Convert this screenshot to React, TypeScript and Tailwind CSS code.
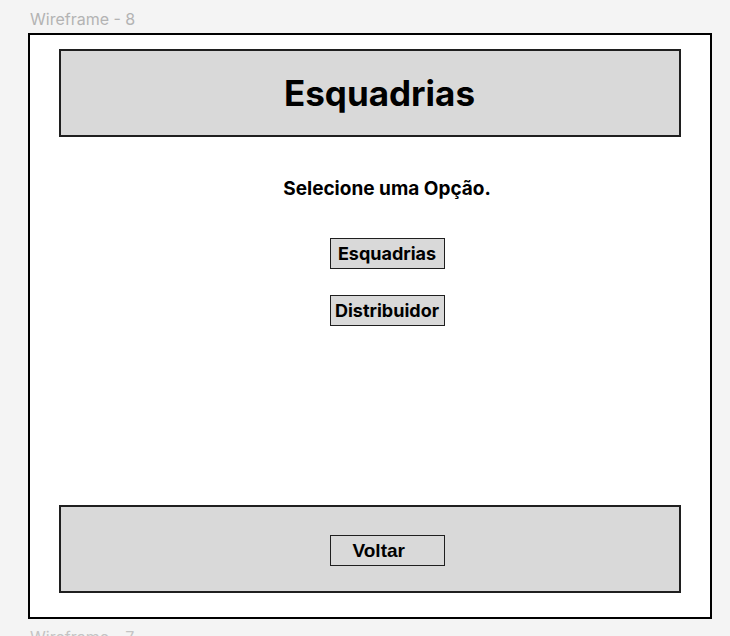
import React from "react";

export default function App() {
  return (
    <div className="w-[730px] h-[636px] bg-[#f4f4f4] overflow-hidden relative" style={{ fontFamily: "Inter, 'Noto Sans', sans-serif" }}>
      <div className="h-[33px] pl-[30px] pt-[9px] text-[16px] leading-[20px] text-[#b3b3b3]">Wireframe - 8</div>
      <div className="ml-[28px] w-[684px] h-[586px] border-2 border-black bg-white flex flex-col">
        <div className="mx-[29px] mt-[14px] h-[88px] border-2 border-[#1f1f1f] bg-[#d9d9d9] flex items-center justify-center pl-[19px]">
          <span className="text-[35px] font-bold text-black leading-none">Esquadrias</span>
        </div>
        <div className="flex flex-col items-center pl-[34px]">
          <div className="mt-[40px] text-[19px] leading-[23px] font-bold text-black">Selecione uma Opção.</div>
          <button className="mt-[38px] w-[115px] h-[31px] border border-[#1f1f1f] bg-[#d9d9d9] text-[18px] font-bold text-black leading-none">Esquadrias</button>
          <button className="mt-[26px] w-[115px] h-[31px] border border-[#1f1f1f] bg-[#d9d9d9] text-[18px] font-bold text-black leading-none">Distribuidor</button>
        </div>
        <div className="mt-auto mb-[24px] mx-[29px] h-[88px] border-2 border-[#1f1f1f] bg-[#d9d9d9] flex items-center justify-center pl-[34px] pt-[2px]">
          <button className="w-[115px] h-[31px] border border-[#1f1f1f] bg-[#d9d9d9] text-left pl-[22px] text-[19px] font-bold text-black leading-none" style={{ fontFamily: "'Liberation Sans', Arial, sans-serif" }}>Voltar</button>
        </div>
      </div>
      <div className="pl-[30px] pt-[8px] text-[16px] leading-[20px] text-[#c4c4c4]">Wireframe - 7</div>
    </div>
  );
}
